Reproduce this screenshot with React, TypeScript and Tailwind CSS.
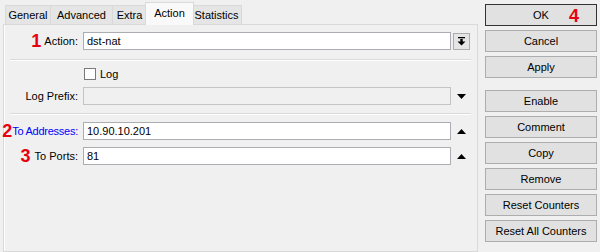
import React from "react";

function Tab({ label, w, selected }: { label: string; w: number; selected?: boolean }) {
  if (selected) {
    return (
      <div
        className="relative z-10 -mx-[2px] h-[23px] mb-[-1px] border border-b-0 border-[#d9d9d9] bg-[#f9f9f9] flex items-center justify-center pb-[2px]"
        style={{ width: w + 4 }}
      >
        {label}
      </div>
    );
  }
  return (
    <div
      className="h-[19px] border border-b-0 border-[#d9d9d9] bg-[#e5e5e5] flex items-center justify-center -ml-[1px] first:ml-0"
      style={{ width: w }}
    >
      {label}
    </div>
  );
}

function Btn({ label, def, extra }: { label: string; def?: boolean; extra?: React.ReactNode }) {
  return (
    <div
      className={
        "relative h-[22px] flex items-center justify-center bg-[#e1e1e1] border " +
        (def ? "border-[#333333]" : "border-[#adadad]")
      }
    >
      {label}
      {extra}
    </div>
  );
}

function Num({ n, className }: { n: string; className?: string }) {
  return (
    <span className={"text-[#e60012] text-[18px] font-bold leading-none " + (className || "")}>{n}</span>
  );
}

function TriUp() {
  return (
    <svg width="9" height="5" viewBox="0 0 9 5">
      <polygon points="0,5 9,5 4.5,0" fill="#000" />
    </svg>
  );
}
function TriDown() {
  return (
    <svg width="9" height="5" viewBox="0 0 9 5">
      <polygon points="0,0 9,0 4.5,5" fill="#000" />
    </svg>
  );
}

export default function App() {
  return (
    <div className="w-[600px] h-[252px] bg-[#f0f0f0] flex overflow-hidden text-[11px] text-black font-['Liberation_Sans',Arial,sans-serif] leading-none">
      {/* Left side */}
      <div className="w-[478px] pl-[3px] pt-[4px] flex flex-col">
        <div className="flex items-end h-[20px] pl-[2px]">
          <Tab label="General" w={46} />
          <Tab label="Advanced" w={63} />
          <Tab label="Extra" w={35} />
          <Tab label="Action" w={45} selected />
          <Tab label="Statistics" w={51} />
        </div>
        <div className="flex-1 border border-[#d9d9d9] bg-[#f0f0f0] shadow-[inset_1px_0_0_#ffffff] pr-[6px]">
          {/* Action row */}
          <div className="flex items-center mt-[7px] h-[18px]">
            <div className="w-[74px] flex justify-end items-center whitespace-nowrap">
              <Num n="1" className="mr-[3px]" />
              <span>Action:</span>
            </div>
            <div className="ml-[5px] w-[368px] h-[18px] bg-white border border-[#abadb3] flex items-center px-[3px]">
              dst-nat
            </div>
            <div className="ml-[2px] w-[17px] h-[17px] border border-[#adadad] bg-[#e5e5e5] flex items-center justify-center">
              <svg width="9" height="9" viewBox="0 0 9 9">
                <rect x="1" y="0" width="7" height="1.3" fill="#000" />
                <rect x="3.3" y="2" width="2.4" height="3" fill="#000" />
                <polygon points="0.5,4.5 8.5,4.5 4.5,8.5" fill="#000" />
              </svg>
            </div>
          </div>
          <div className="ml-[6px] mt-[9px] h-px bg-[#dadada] border-b border-white box-content" />
          {/* Log checkbox */}
          <div className="flex items-center mt-[7px] h-[12px] pl-[80px]">
            <div className="w-[12px] h-[12px] border border-[#7a7a7a] bg-white" />
            <span className="ml-[4px]">Log</span>
          </div>
          {/* Log Prefix */}
          <div className="flex items-center mt-[7px] h-[18px]">
            <div className="w-[74px] flex justify-end whitespace-nowrap">Log Prefix:</div>
            <div className="ml-[5px] w-[368px] h-[18px] bg-[#f0f0f0] border border-[#c4c4c4]" />
            <div className="ml-[2px] w-[17px] flex justify-center">
              <TriDown />
            </div>
          </div>
          <div className="ml-[6px] mt-[8px] h-px bg-[#dadada] border-b border-white box-content" />
          {/* To Addresses */}
          <div className="flex items-center mt-[7px] h-[18px]">
            <div className="w-[74px] flex justify-end items-center whitespace-nowrap">
              <Num n="2" className="text-[17px]" />
              <span className="text-[#0000ff] tracking-[-0.25px]">To Addresses:</span>
            </div>
            <div className="ml-[5px] w-[368px] h-[18px] bg-white border border-[#abadb3] flex items-center px-[3px]">
              10.90.10.201
            </div>
            <div className="ml-[2px] w-[17px] flex justify-center">
              <TriUp />
            </div>
          </div>
          {/* To Ports */}
          <div className="flex items-center mt-[7px] h-[18px]">
            <div className="w-[74px] flex justify-end items-center whitespace-nowrap">
              <Num n="3" className="mr-[4px]" />
              <span>To Ports:</span>
            </div>
            <div className="ml-[5px] w-[368px] h-[18px] bg-white border border-[#abadb3] flex items-center px-[3px]">
              81
            </div>
            <div className="ml-[2px] w-[17px] flex justify-center">
              <TriUp />
            </div>
          </div>
        </div>
      </div>
      {/* Right side buttons */}
      <div className="ml-[7px] w-[112px] pt-[4px] flex flex-col gap-[4px]">
        <Btn
          label="OK"
          def
          extra={<Num n="4" className="absolute left-[83px] top-[2px]" />}
        />
        <Btn label="Cancel" />
        <Btn label="Apply" />
        <div className="h-[4px]" />
        <Btn label="Enable" />
        <Btn label="Comment" />
        <Btn label="Copy" />
        <Btn label="Remove" />
        <Btn label="Reset Counters" />
        <Btn label="Reset All Counters" />
      </div>
    </div>
  );
}
